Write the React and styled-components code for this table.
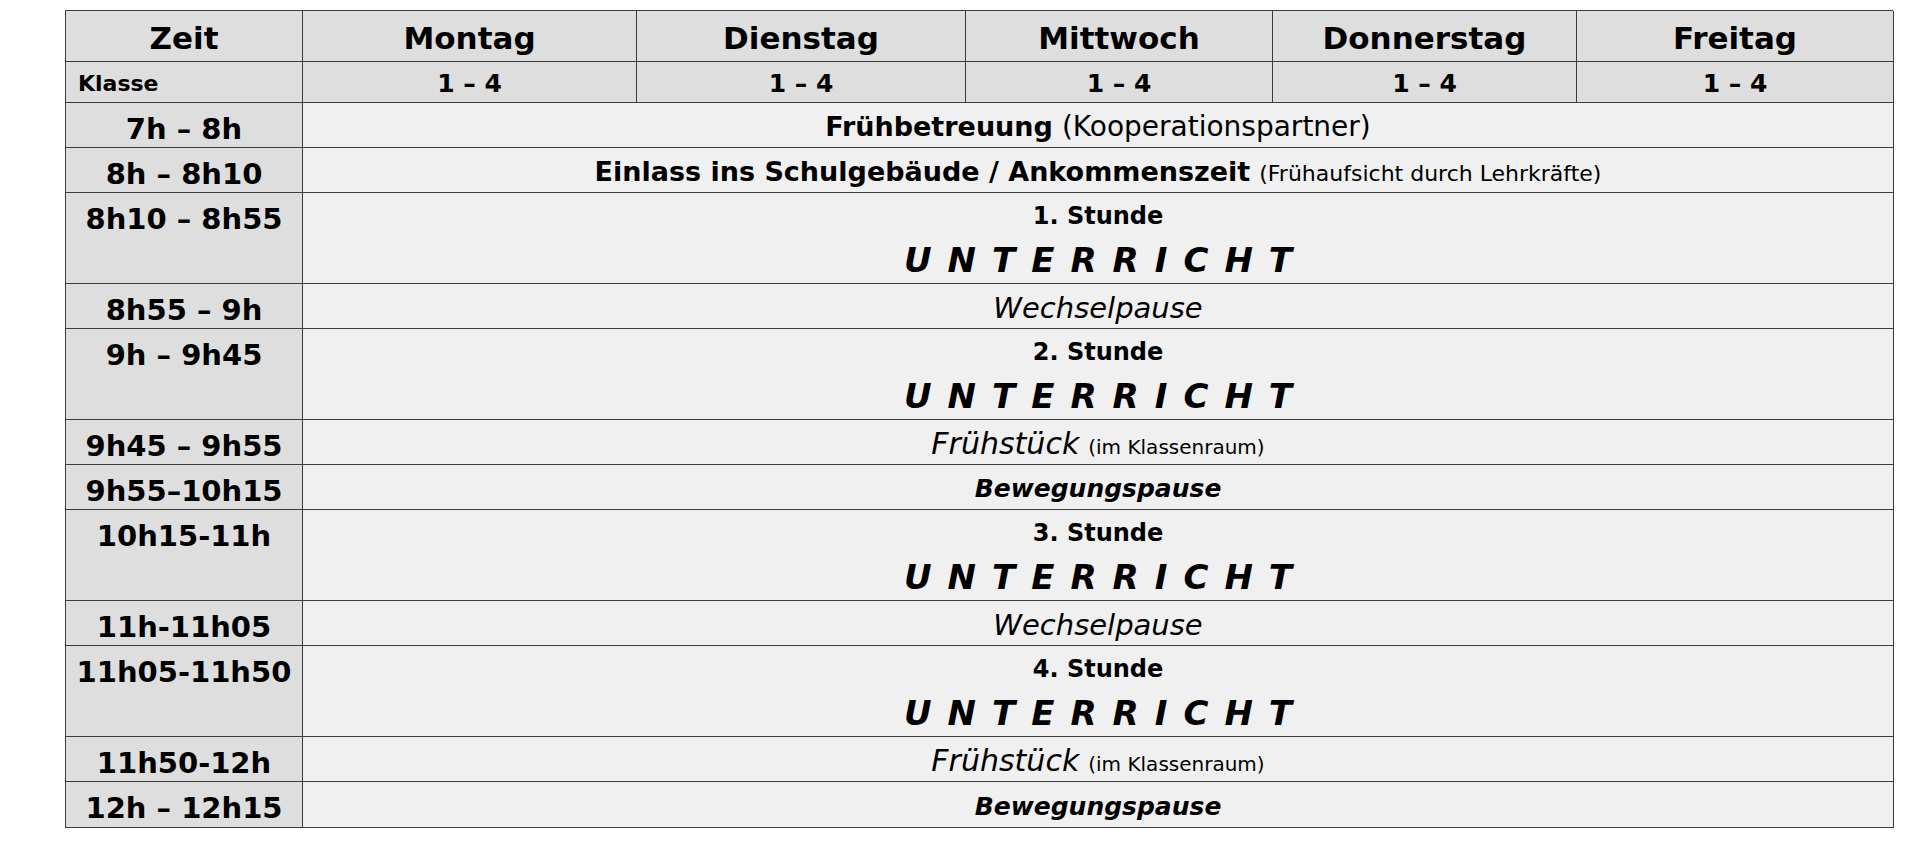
import React from 'react';
import styled, { createGlobalStyle } from 'styled-components';

const GlobalStyle = createGlobalStyle`
  html, body {
    margin: 0;
    padding: 0;
    background: #fff;
  }
  body {
    font-family: "DejaVu Sans", "Liberation Sans", sans-serif;
    color: #000;
  }
`;

const days = ['Montag', 'Dienstag', 'Mittwoch', 'Donnerstag', 'Freitag'];

// kind: short = one line, lesson = 2 lines (Stunde + UNTERRICHT)
const rows = [
  { time: '7h – 8h', kind: 'fruehbetreuung' },
  { time: '8h – 8h10', kind: 'einlass' },
  { time: '8h10 – 8h55', kind: 'lesson', nr: 1 },
  { time: '8h55 – 9h', kind: 'wechsel' },
  { time: '9h – 9h45', kind: 'lesson', nr: 2 },
  { time: '9h45 – 9h55', kind: 'fruehstueck' },
  { time: '9h55–10h15', kind: 'bewegung' },
  { time: '10h15-11h', kind: 'lesson', nr: 3 },
  { time: '11h-11h05', kind: 'wechsel' },
  { time: '11h05-11h50', kind: 'lesson', nr: 4 },
  { time: '11h50-12h', kind: 'fruehstueck' },
  { time: '12h – 12h15', kind: 'bewegung', last: true },
];

function SpanContent({ row }) {
  switch (row.kind) {
    case 'fruehbetreuung':
      return (
        <Line>
          <Strong>Frühbetreuung</Strong> <Plain>(Kooperationspartner)</Plain>
        </Line>
      );
    case 'einlass':
      return (
        <Line>
          <Strong>Einlass ins Schulgebäude / Ankommenszeit</Strong> <Small>(Frühaufsicht durch Lehrkräfte)</Small>
        </Line>
      );
    case 'lesson':
      return (
        <>
          <Stunde>{row.nr}. Stunde</Stunde>
          <Unterricht>UNTERRICHT</Unterricht>
        </>
      );
    case 'wechsel':
      return <Wechsel>Wechselpause</Wechsel>;
    case 'fruehstueck':
      return (
        <Line>
          <Breakfast>Frühstück</Breakfast> <Tiny>(im Klassenraum)</Tiny>
        </Line>
      );
    case 'bewegung':
      return <Bewegung>Bewegungspause</Bewegung>;
    default:
      return null;
  }
}

function App() {
  return (
    <Page>
      <GlobalStyle />
      <Table>
        <HeadCell>Zeit</HeadCell>
        {days.map((d) => (
          <HeadCell key={d}>{d}</HeadCell>
        ))}
        <KlasseCell>Klasse</KlasseCell>
        {days.map((d) => (
          <GradeCell key={d}>1 – 4</GradeCell>
        ))}
        {rows.map((row, i) => (
          <React.Fragment key={i}>
            <TimeCell>{row.time}</TimeCell>
            <SpanCell lesson={row.kind === 'lesson'}>
              <SpanContent row={row} />
            </SpanCell>
          </React.Fragment>
        ))}
      </Table>
    </Page>
  );
}

const Page = styled.div`
  padding: 10px 0 0 65px;
`;

const Table = styled.div`
  display: grid;
  width: 1828px;
  grid-template-columns: 237px 334px 329px 307px 304px 317px;
  grid-template-rows: 51px 41px 45px 45px 91px 45px 91px 45px 45px 91px 45px 91px 45px 46px;
  border-top: 1px solid #3c3c3c;
  border-left: 1px solid #3c3c3c;
  box-sizing: border-box;
`;

const Cell = styled.div`
  box-sizing: border-box;
  border-right: 1px solid #3c3c3c;
  border-bottom: 1px solid #3c3c3c;
  display: flex;
  justify-content: center;
  align-items: center;
  white-space: nowrap;
`;

const HeadCell = styled(Cell)`
  background: #dedede;
  font-size: 31px;
  font-weight: bold;
  padding-top: 4px;
`;

const KlasseCell = styled(Cell)`
  background: #dedede;
  font-size: 22px;
  font-weight: bold;
  justify-content: flex-start;
  padding: 2px 0 0 12px;
`;

const GradeCell = styled(Cell)`
  background: #dedede;
  font-size: 25px;
  font-weight: bold;
  padding-top: 2px;
`;

const TimeCell = styled(Cell)`
  background: #dedede;
  font-size: 29px;
  font-weight: bold;
  align-items: flex-start;
  line-height: 44px;
  padding-top: 4px;
`;

const SpanCell = styled(Cell)`
  grid-column: 2 / -1;
  background: #f0f0f0;
  flex-direction: column;
  justify-content: ${(p) => (p.lesson ? 'flex-start' : 'center')};
  padding-top: ${(p) => (p.lesson ? '5px' : '3px')};
`;

const Line = styled.div`
  display: flex;
  align-items: baseline;
  gap: 9px;
`;

const Strong = styled.span`
  font-size: 27px;
  font-weight: bold;
`;

const Plain = styled.span`
  font-size: 28px;
`;

const Small = styled.span`
  font-size: 22px;
`;

const Stunde = styled.div`
  font-size: 24px;
  font-weight: bold;
  line-height: 36px;
`;

const Unterricht = styled.div`
  font-size: 34px;
  font-weight: bold;
  font-style: italic;
  letter-spacing: 16px;
  margin-right: -16px;
  line-height: 44px;
  margin-top: 4px;
`;

const Wechsel = styled.div`
  font-size: 29px;
  font-style: italic;
`;

const Breakfast = styled.span`
  font-size: 30px;
  font-style: italic;
`;

const Tiny = styled.span`
  font-size: 20px;
`;

const Bewegung = styled.div`
  font-size: 25px;
  font-weight: bold;
  font-style: italic;
`;

export default App;
